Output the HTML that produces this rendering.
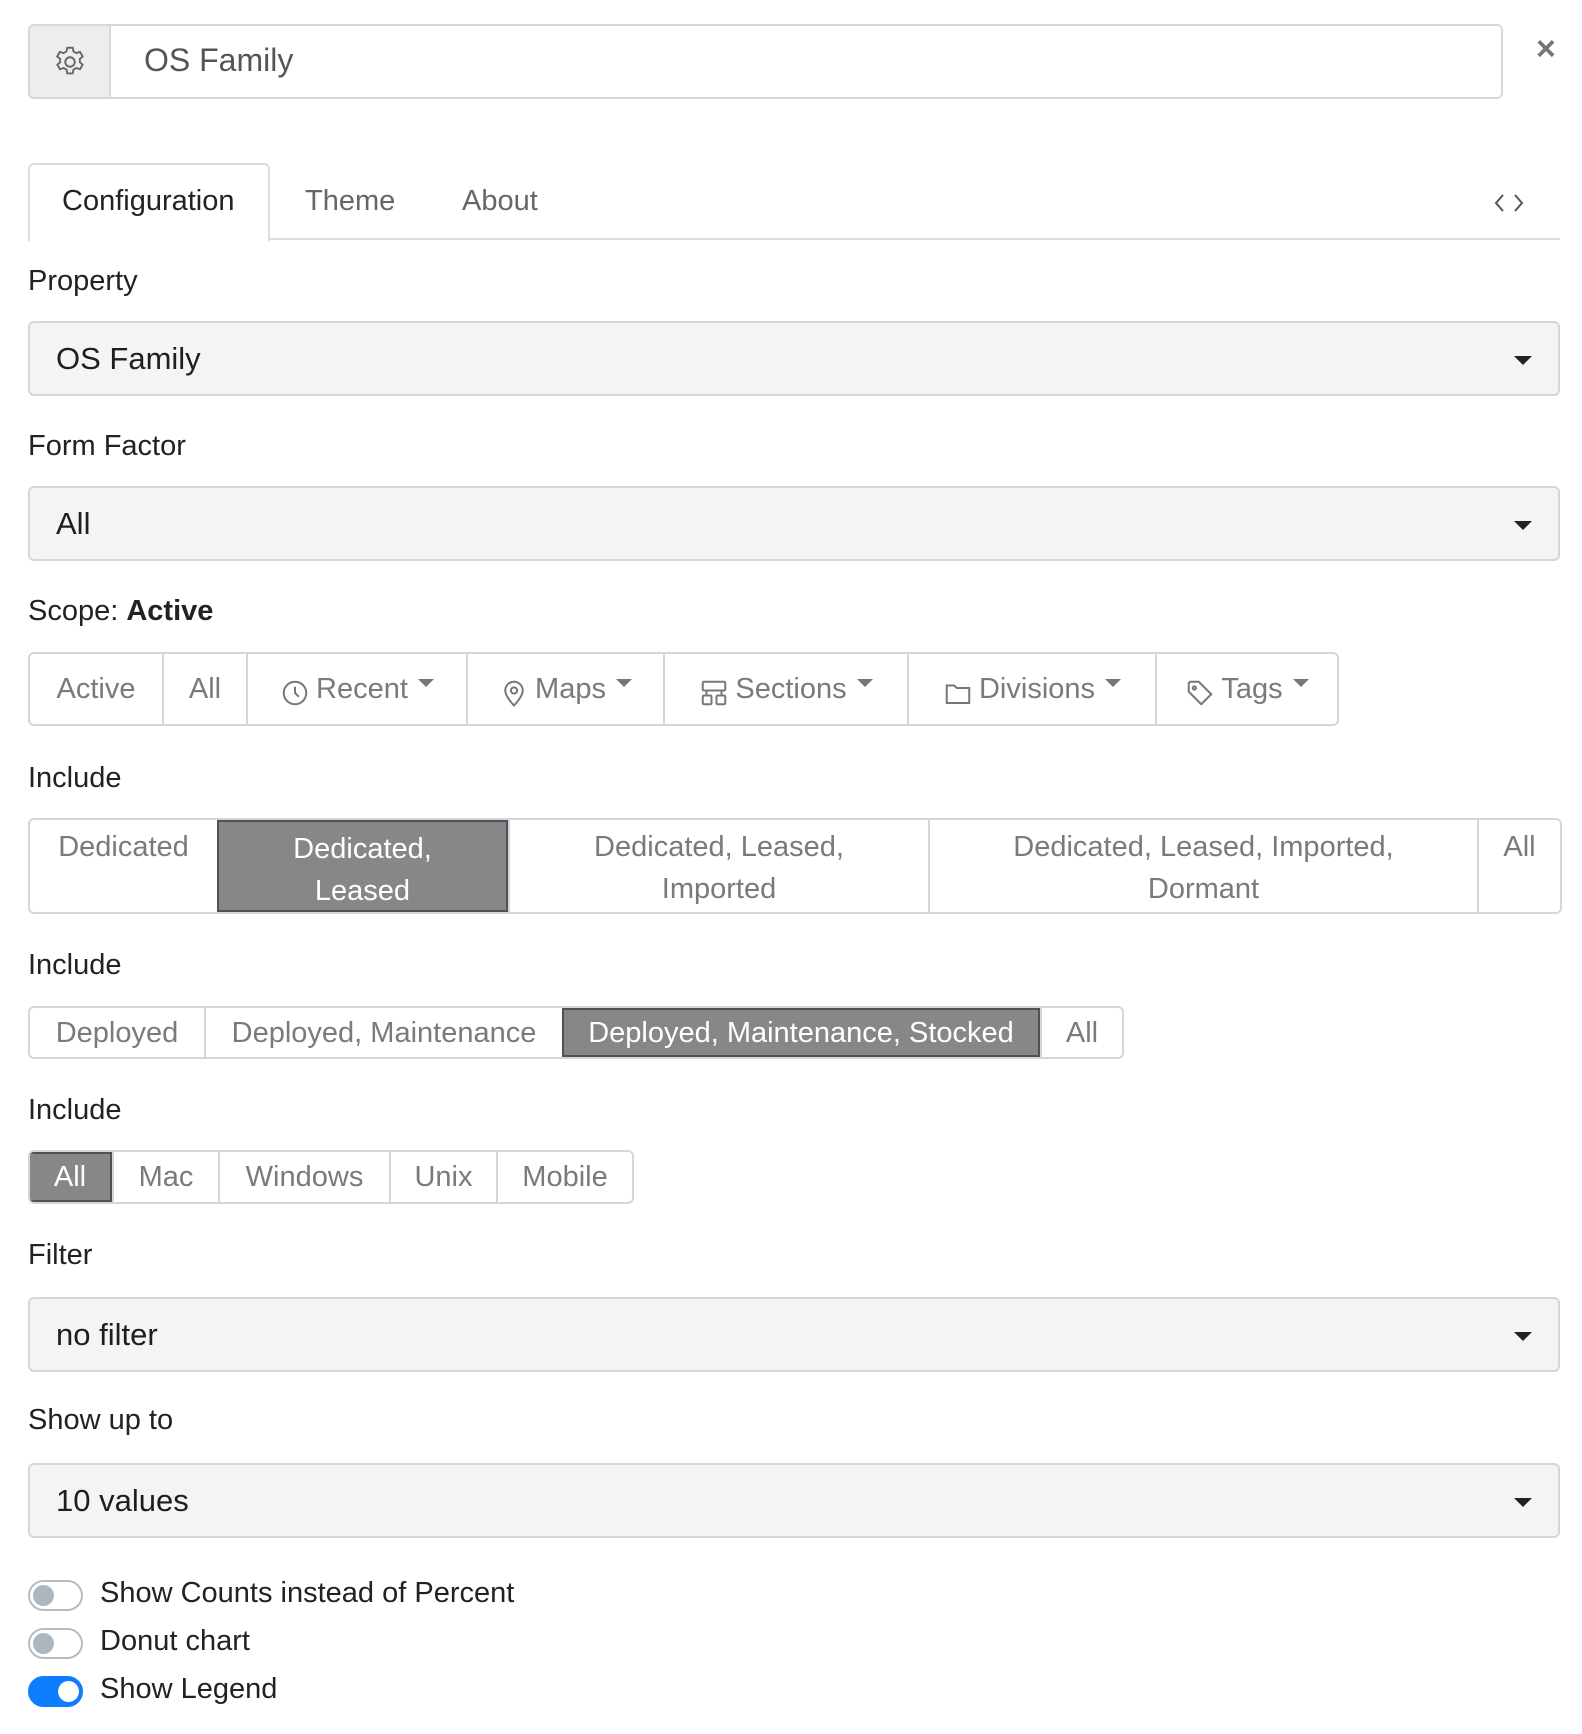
<!DOCTYPE html>
<html><head><meta charset="utf-8"><style>
*{box-sizing:border-box;margin:0;padding:0}
body{width:1582px;height:1734px;background:#fff;font-family:"Liberation Sans",sans-serif;color:#212529;position:relative;overflow:hidden}
.a{position:absolute}
.lbl{position:absolute;left:28px;font-size:29px;color:#222}
.sel{position:absolute;left:28px;width:1532px;height:75px;background:#f4f4f4;border:2px solid #d6d6d6;border-radius:6px;font-size:31px;padding-left:26px;display:flex;align-items:center;color:#1e1e1e}
.sel:after{content:"";position:absolute;right:26px;top:33px;border-left:9px solid transparent;border-right:9px solid transparent;border-top:9px solid #222}
.grp{position:absolute;left:28px;border:2px solid #d3d6db;border-radius:6px;display:flex;overflow:hidden}
.grp div{border-left:2px solid #d3d6db;color:#7a7a7a;font-size:29px;display:flex;justify-content:center;align-items:center;text-align:center;line-height:42px}
.grp div:first-child{border-left:none}
.grp .on{background:#868789;color:#fff;border:2px solid #505152}
.car{display:inline-block;margin-left:10px;border-left:8px solid transparent;border-right:8px solid transparent;border-top:8px solid #777;vertical-align:middle;position:relative;top:-6px}
.tg{position:absolute;left:28px;width:55px;height:31px;border:2px solid #b8bcc0;border-radius:16px}
.tg:after{content:"";position:absolute;left:3px;top:3px;width:21px;height:21px;border-radius:50%;background:#adb5bd}
.tg.on{background:#0d7dfd;border-color:#0d7dfd}
.tg.on:after{left:28px;background:#fff}
.tt{position:absolute;left:100px;font-size:29px;color:#222}
</style></head><body>
<div class="a" style="left:28px;top:24px;width:1475px;height:75px;border:2px solid #d8d8d8;border-radius:6px;background:#fff"></div>
<div class="a" style="left:28px;top:24px;width:83px;height:75px;background:#eceeee;border:2px solid #d8d8d8;border-radius:6px 0 0 6px"></div>
<svg class="a" style="left:51px;top:43px" width="38" height="38" viewBox="0 0 24 24" fill="none" stroke="#666" stroke-width="1.2"><circle cx="12" cy="12" r="3"/><path d="M10.3 3h3.4l.5 2.4 1.8 1 2.3-.8 1.7 2.9-1.8 1.6v2l1.8 1.6-1.7 2.9-2.3-.8-1.8 1-.5 2.4h-3.4l-.5-2.4-1.8-1-2.3.8-1.7-2.9 1.8-1.6v-2L3.9 8.5l1.7-2.9 2.3.8 1.8-1z"/></svg>
<div class="a" style="left:144px;top:42px;font-size:32px;color:#555">OS Family</div>
<div class="a" style="left:1536px;top:30px;font-size:34px;color:#777;font-weight:bold">×</div>

<div class="a" style="left:28px;top:238px;width:1532px;height:2px;background:#dcdcdc"></div>
<div class="a" style="left:28px;top:163px;width:242px;height:78px;background:#fff;border:2px solid #dcdcdc;border-bottom:none;border-radius:6px 6px 0 0"></div>
<div class="a" style="left:62px;top:185px;font-size:29px;color:#222">Configuration</div>
<div class="a" style="left:305px;top:185px;font-size:29px;color:#666">Theme</div>
<div class="a" style="left:462px;top:185px;font-size:29px;color:#666">About</div>
<svg class="a" style="left:1493px;top:192px" width="32" height="22" viewBox="0 0 32 22" fill="none" stroke="#555" stroke-width="2"><path d="M10 3 3 11l7 8M22 3l7 8-7 8"/></svg>

<div class="lbl" style="top:265px">Property</div>
<div class="sel" style="top:321px">OS Family</div>
<div class="lbl" style="top:430px">Form Factor</div>
<div class="sel" style="top:486px">All</div>
<div class="lbl" style="top:595px">Scope: <b>Active</b></div>
<div class="grp" style="top:652px;height:74px">
<div style="width:132px">Active</div>
<div style="width:84px">All</div>
<div style="width:220px"><svg width="30" height="30" viewBox="0 0 24 24" fill="none" stroke="#777" stroke-width="1.6" style="margin:8px 6px 0 0"><circle cx="12" cy="12" r="9"/><path d="M12 7v5l3 3"/></svg>Recent<span class="car"></span></div>
<div style="width:197px"><svg width="30" height="30" viewBox="0 0 24 24" fill="none" stroke="#777" stroke-width="1.6" style="margin:8px 6px 0 0"><path d="M12 22s-7-7-7-12a7 7 0 0 1 14 0c0 5-7 12-7 12z"/><circle cx="12" cy="10" r="2.5"/></svg>Maps<span class="car"></span></div>
<div style="width:244px"><svg width="30" height="30" viewBox="0 0 24 24" fill="none" stroke="#777" stroke-width="1.6" style="margin:8px 6px 0 0"><rect x="3" y="3" width="18" height="7" rx="1"/><rect x="3" y="14" width="7" height="7" rx="1"/><rect x="14" y="14" width="7" height="7" rx="1"/><path d="M6 10v4M18 10v4"/></svg>Sections<span class="car"></span></div>
<div style="width:248px"><svg width="30" height="30" viewBox="0 0 24 24" fill="none" stroke="#777" stroke-width="1.6" style="margin:8px 6px 0 0"><path d="M3 6h6l2 2h10v12H3z"/></svg>Divisions<span class="car"></span></div>
<div style="width:182px"><svg width="30" height="30" viewBox="0 0 24 24" fill="none" stroke="#777" stroke-width="1.6" style="margin:8px 6px 0 0"><path d="M3 4v7l10 10 8-8L11 3H4z"/><circle cx="7.5" cy="8" r="1.3"/></svg>Tags<span class="car"></span></div>
</div>

<div class="lbl" style="top:762px">Include</div>
<div class="grp" style="top:818px;height:96px">
<div style="width:187px;align-items:flex-start;padding-top:6px">Dedicated</div>
<div class="on" style="width:291px;align-items:flex-start;padding-top:6px">Dedicated,<br>Leased</div>
<div style="width:420px;align-items:flex-start;padding-top:6px">Dedicated, Leased,<br>Imported</div>
<div style="width:549px;align-items:flex-start;padding-top:6px">Dedicated, Leased, Imported,<br>Dormant</div>
<div style="width:83px;align-items:flex-start;padding-top:6px">All</div>
</div>

<div class="lbl" style="top:949px">Include</div>
<div class="grp" style="top:1006px;height:53px">
<div style="width:174px">Deployed</div>
<div style="width:358px">Deployed, Maintenance</div>
<div class="on" style="width:478px">Deployed, Maintenance, Stocked</div>
<div style="width:82px">All</div>
</div>

<div class="lbl" style="top:1094px">Include</div>
<div class="grp" style="top:1150px;height:54px">
<div class="on" style="width:82px">All</div>
<div style="width:106px">Mac</div>
<div style="width:171px">Windows</div>
<div style="width:107px">Unix</div>
<div style="width:136px">Mobile</div>
</div>

<div class="lbl" style="top:1239px">Filter</div>
<div class="sel" style="top:1297px">no filter</div>
<div class="lbl" style="top:1404px">Show up to</div>
<div class="sel" style="top:1463px">10 values</div>

<div class="tg" style="top:1580px"></div><div class="tt" style="top:1577px">Show Counts instead of Percent</div>
<div class="tg" style="top:1628px"></div><div class="tt" style="top:1625px">Donut chart</div>
<div class="tg on" style="top:1676px"></div><div class="tt" style="top:1673px">Show Legend</div>
</body></html>
